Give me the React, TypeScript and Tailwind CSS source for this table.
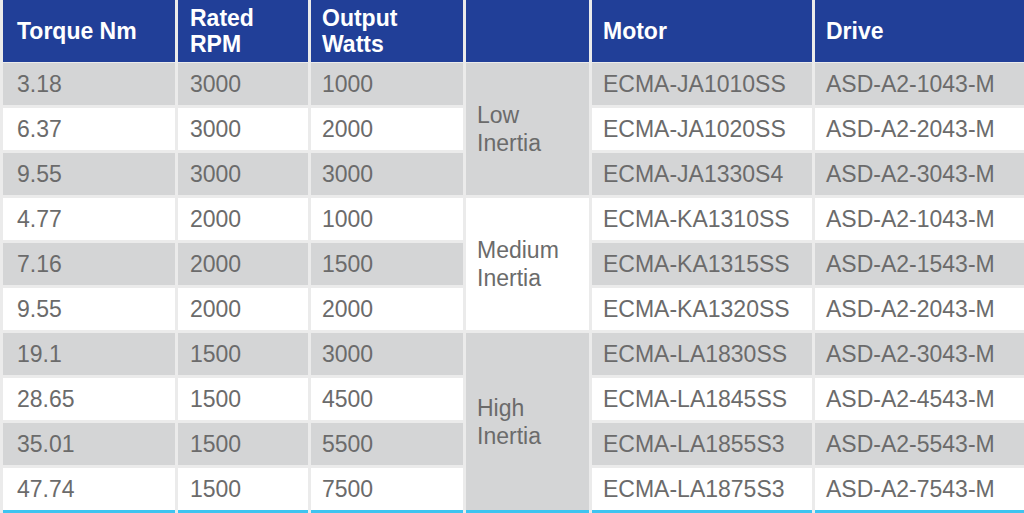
import React from "react";

const rows = [
  ["3.18", "3000", "1000", "ECMA-JA1010SS", "ASD-A2-1043-M"],
  ["6.37", "3000", "2000", "ECMA-JA1020SS", "ASD-A2-2043-M"],
  ["9.55", "3000", "3000", "ECMA-JA1330S4", "ASD-A2-3043-M"],
  ["4.77", "2000", "1000", "ECMA-KA1310SS", "ASD-A2-1043-M"],
  ["7.16", "2000", "1500", "ECMA-KA1315SS", "ASD-A2-1543-M"],
  ["9.55", "2000", "2000", "ECMA-KA1320SS", "ASD-A2-2043-M"],
  ["19.1", "1500", "3000", "ECMA-LA1830SS", "ASD-A2-3043-M"],
  ["28.65", "1500", "4500", "ECMA-LA1845SS", "ASD-A2-4543-M"],
  ["35.01", "1500", "5500", "ECMA-LA1855S3", "ASD-A2-5543-M"],
  ["47.74", "1500", "7500", "ECMA-LA1875S3", "ASD-A2-7543-M"],
];

const groups = [
  { label: ["Low", "Inertia"], start: 1, span: "row-span-3", gray: true },
  { label: ["Medium", "Inertia"], start: 4, span: "row-span-3", gray: false },
  { label: ["High", "Inertia"], start: 7, span: "row-span-4", gray: true },
];

const rowStart = [
  "row-start-1",
  "row-start-2",
  "row-start-3",
  "row-start-4",
  "row-start-5",
  "row-start-6",
  "row-start-7",
  "row-start-8",
  "row-start-9",
  "row-start-10",
];
const colStart = ["col-start-1", "col-start-2", "col-start-3", "col-start-5", "col-start-6"];
const colPad = ["px-[14px]", "px-[12px]", "px-[11px]", "px-[11px]", "px-[11px]"];

const cols = "grid grid-cols-[172px_130px_152px_123px_220px_1fr] gap-x-[3px]";

export default function App() {
  return (
    <div
      className="w-[1024px] h-[513px] overflow-hidden bg-[#ebebeb] pl-[3px] flex flex-col"
      style={{ fontFamily: '"Liberation Sans", Arial, sans-serif' }}
    >
      <div className={`${cols} h-[62px] mb-[1px] text-white font-bold text-[23px] leading-[26px]`}>
        <div className="bg-[#213f98] flex items-center px-[14px]">Torque Nm</div>
        <div className="bg-[#213f98] flex items-center px-[12px]">
          <div>
            Rated
            <br />
            RPM
          </div>
        </div>
        <div className="bg-[#213f98] flex items-center px-[11px]">
          <div>
            Output
            <br />
            Watts
          </div>
        </div>
        <div className="bg-[#213f98]" />
        <div className="bg-[#213f98] flex items-center px-[11px]">Motor</div>
        <div className="bg-[#213f98] flex items-center px-[11px]">Drive</div>
      </div>
      <div
        className={`${cols} gap-y-[3px] grid-rows-[repeat(9,42px)_45px] text-[23px] leading-[26px] text-[#6b6b6b]`}
      >
        {rows.map((r, i) =>
          r.map((v, j) => (
            <div
              key={`${i}-${j}`}
              className={`${rowStart[i]} ${colStart[j]} flex items-center ${colPad[j]} ${
                i % 2 === 0 ? "bg-[#d4d5d6]" : "bg-white"
              } ${i === 9 ? "border-b-[3px] border-[#3ec4f0]" : ""}`}
            >
              {v}
            </div>
          ))
        )}
        {groups.map((g) => (
          <div
            key={g.start}
            className={`col-start-4 ${rowStart[g.start - 1]} ${g.span} flex items-center px-[11px] leading-[28px] ${
              g.gray ? "bg-[#d4d5d6]" : "bg-white"
            } ${g.start === 7 ? "border-b-[3px] border-[#3ec4f0]" : ""}`}
          >
            <div>
              {g.label[0]}
              <br />
              {g.label[1]}
            </div>
          </div>
        ))}
      </div>
    </div>
  );
}
